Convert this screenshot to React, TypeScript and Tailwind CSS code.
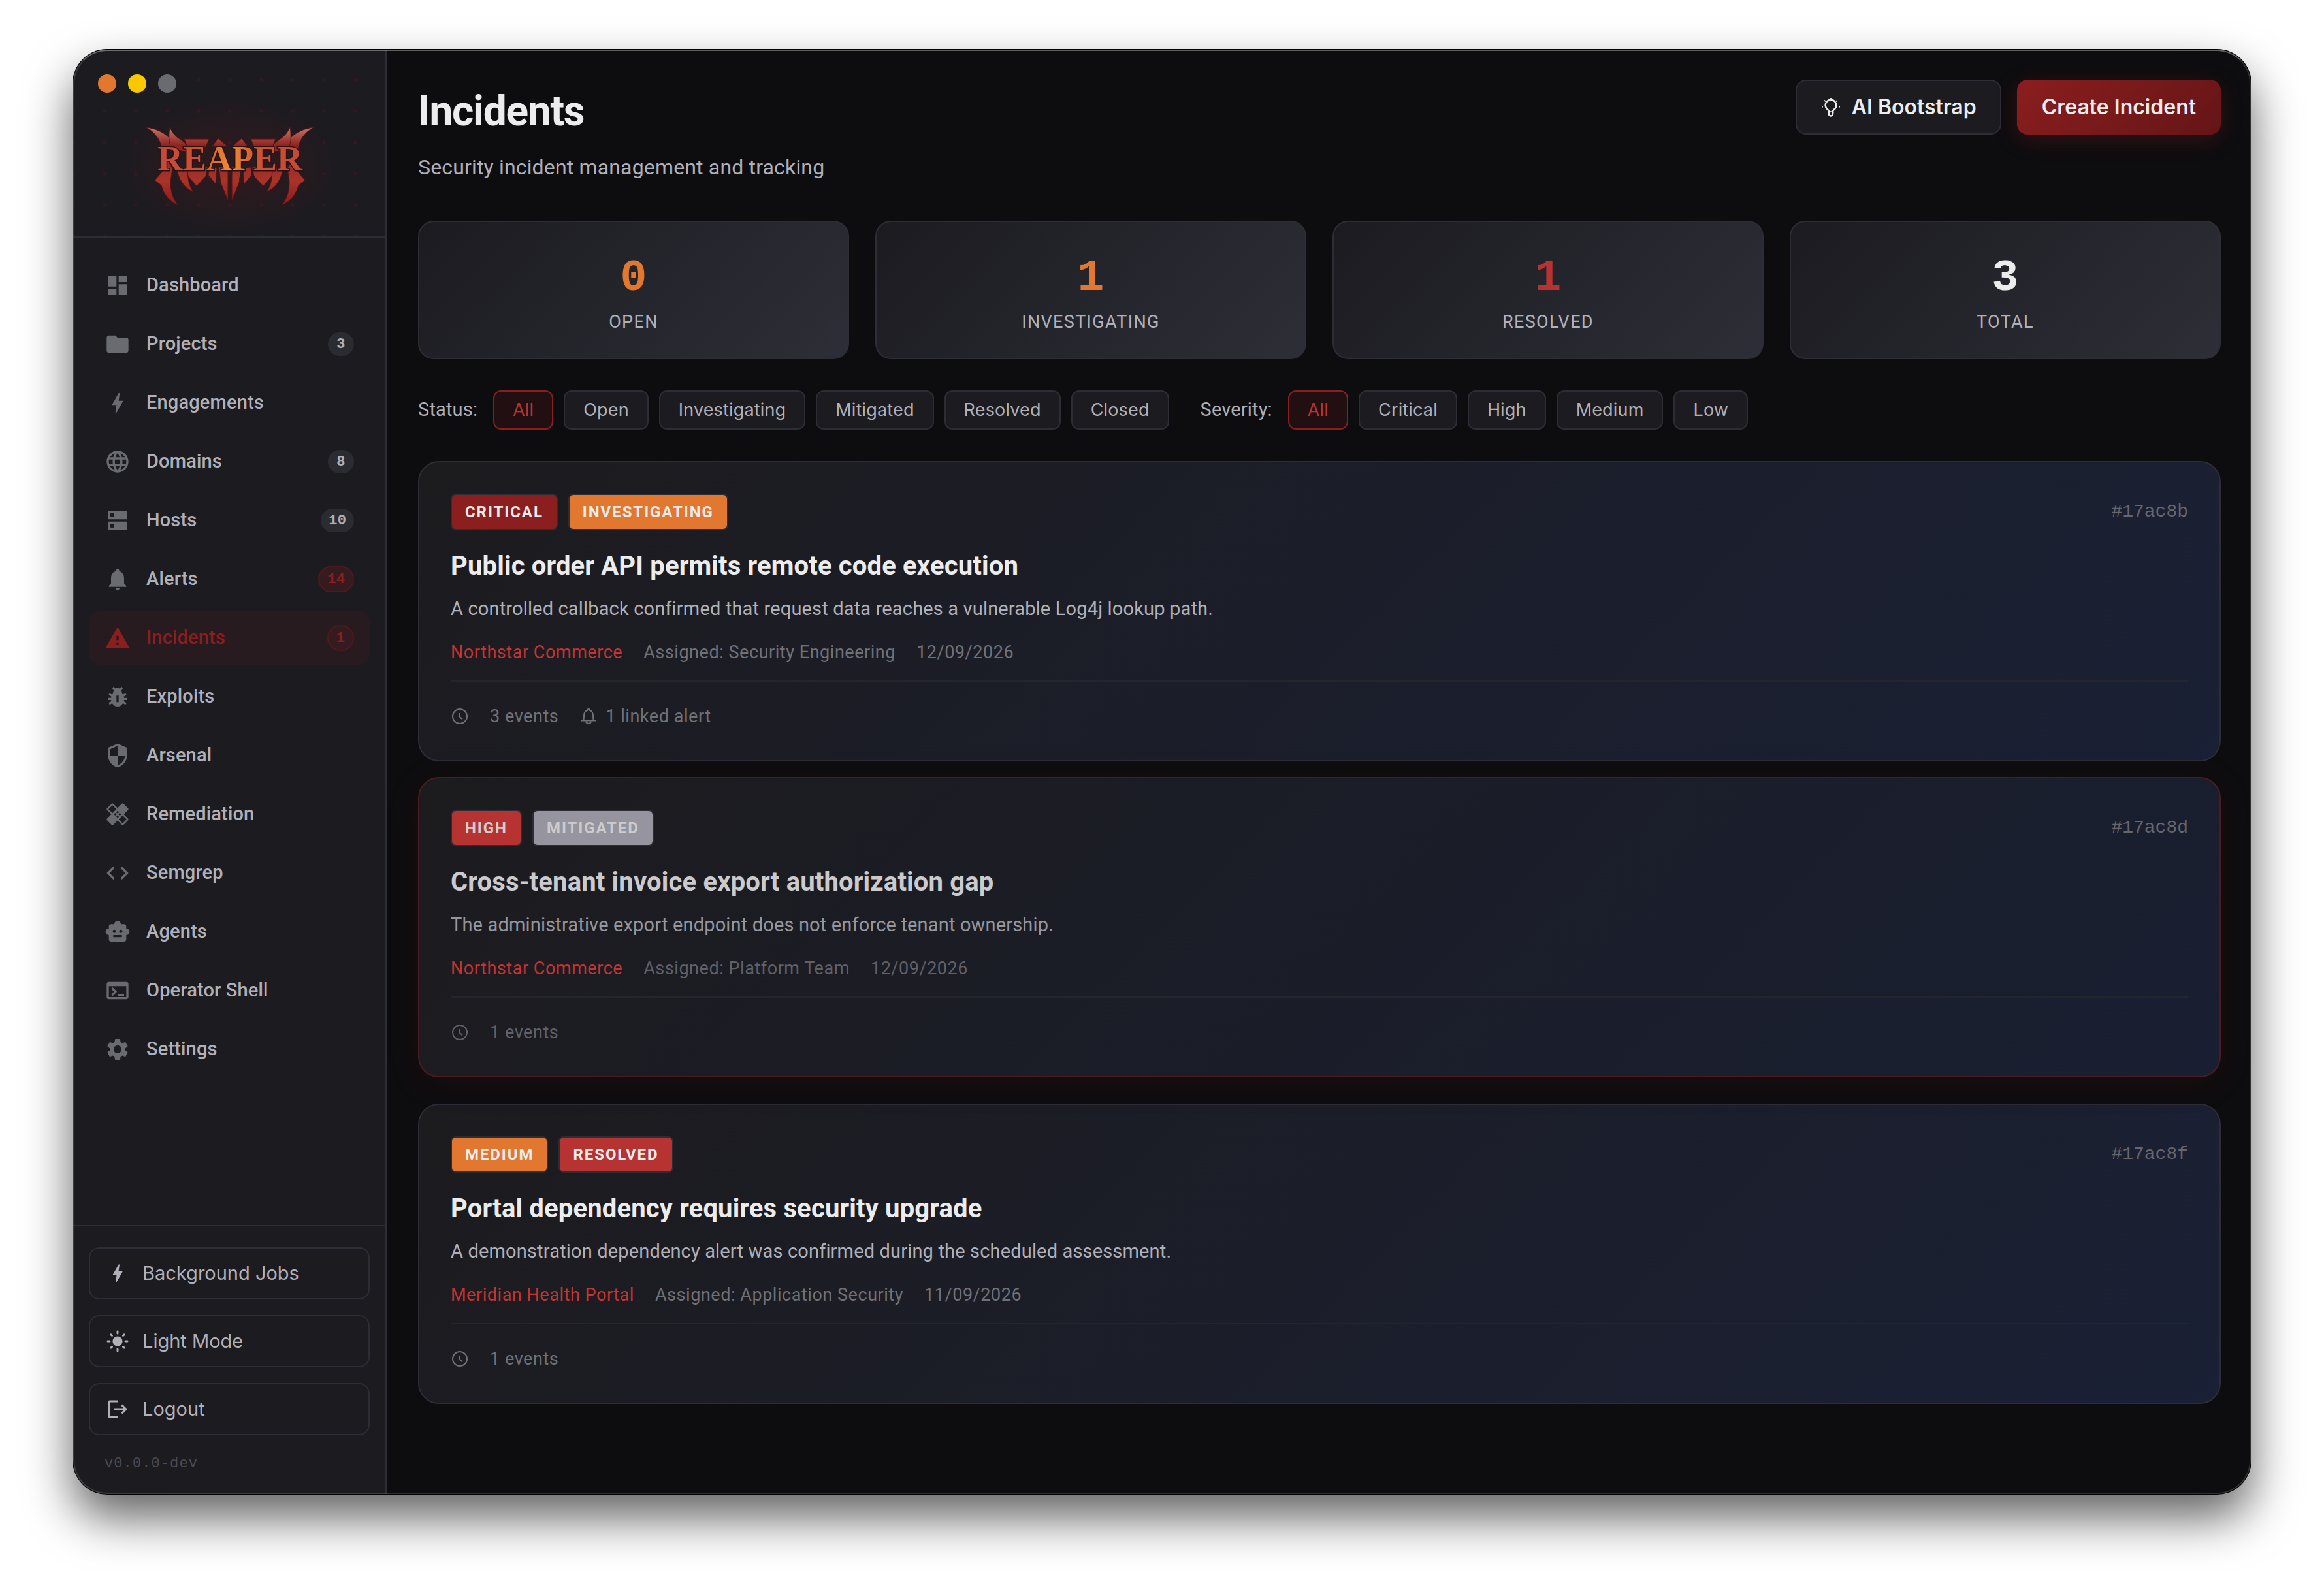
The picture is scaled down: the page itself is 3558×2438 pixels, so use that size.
import React, { useState } from 'react'
import type { IconType } from 'react-icons'
import {
  MdBolt,
  MdCode,
  MdDashboard,
  MdDns,
  MdFolder,
  MdHealing,
  MdLanguage,
  MdLightMode,
  MdLogout,
  MdNotifications,
  MdPestControl,
  MdSecurity,
  MdSettings,
  MdSmartToy,
  MdTerminal,
  MdWarning,
} from 'react-icons/md'

type NavItem = { label: string; icon: IconType; count?: number; alert?: boolean }

const nav: NavItem[] = [
  { label: 'Dashboard', icon: MdDashboard },
  { label: 'Projects', icon: MdFolder, count: 3 },
  { label: 'Engagements', icon: MdBolt },
  { label: 'Domains', icon: MdLanguage, count: 8 },
  { label: 'Hosts', icon: MdDns, count: 10 },
  { label: 'Alerts', icon: MdNotifications, count: 14, alert: true },
  { label: 'Incidents', icon: MdWarning, count: 1, alert: true },
  { label: 'Exploits', icon: MdPestControl },
  { label: 'Arsenal', icon: MdSecurity },
  { label: 'Remediation', icon: MdHealing },
  { label: 'Semgrep', icon: MdCode },
  { label: 'Agents', icon: MdSmartToy },
  { label: 'Operator Shell', icon: MdTerminal },
  { label: 'Settings', icon: MdSettings },
]

const stats = [
  { value: 0, label: 'Open', color: 'text-[#e27730]' },
  { value: 1, label: 'Investigating', color: 'text-[#e27730]' },
  { value: 1, label: 'Resolved', color: 'text-[#b73331]' },
  { value: 3, label: 'Total', color: 'text-[#ececec]' },
]

const incidents = [
  {
    id: '#17ac8b',
    severity: 'Critical',
    status: 'Investigating',
    title: 'Public order API permits remote code execution',
    description: 'A controlled callback confirmed that request data reaches a vulnerable Log4j lookup path.',
    project: 'Northstar Commerce',
    assigned: 'Security Engineering',
    date: '12/09/2026',
    events: 3,
    alerts: 1,
  },
  {
    id: '#17ac8d',
    severity: 'High',
    status: 'Mitigated',
    title: 'Cross-tenant invoice export authorization gap',
    description: 'The administrative export endpoint does not enforce tenant ownership.',
    project: 'Northstar Commerce',
    assigned: 'Platform Team',
    date: '12/09/2026',
    events: 1,
    alerts: 0,
  },
  {
    id: '#17ac8f',
    severity: 'Medium',
    status: 'Resolved',
    title: 'Portal dependency requires security upgrade',
    description: 'A demonstration dependency alert was confirmed during the scheduled assessment.',
    project: 'Meridian Health Portal',
    assigned: 'Application Security',
    date: '11/09/2026',
    events: 1,
    alerts: 0,
  },
]

const badgeColors: Record<string, string> = {
  Critical: 'bg-[#8b1e1e] text-[#ececec]',
  High: 'bg-[#b73331] text-[#d0cfcf]',
  Medium: 'bg-[#e27730] text-[#ececec]',
  Investigating: 'bg-[#e27730] text-[#ececec]',
  Mitigated: 'bg-[#96949e] text-[#cccbcd]',
  Resolved: 'bg-[#b73331] text-[#ececec]',
}

function Logo() {
  return (
    <svg viewBox="0 0 478 220" className="block w-full" role="img" aria-label="Reaper">
      <defs>
        <linearGradient id="lava" x1="130" x2="350" y1="0" y2="0" gradientUnits="userSpaceOnUse">
          <stop offset="0" stopColor="#c4483a" />
          <stop offset="0.3" stopColor="#cf5230" />
          <stop offset="0.5" stopColor="#ee8c34" />
          <stop offset="0.7" stopColor="#cf5230" />
          <stop offset="1" stopColor="#c4483a" />
        </linearGradient>
        <linearGradient id="blade" x1="0" x2="0" y1="50" y2="172" gradientUnits="userSpaceOnUse">
          <stop offset="0" stopColor="#c98070" />
          <stop offset="0.25" stopColor="#8f2420" />
          <stop offset="0.7" stopColor="#a8332a" />
          <stop offset="1" stopColor="#8a1a1a" />
        </linearGradient>
        <radialGradient id="glow">
          <stop offset="0" stopColor="#7a1515" stopOpacity="0.2" />
          <stop offset="0.6" stopColor="#7a1515" stopOpacity="0.1" />
          <stop offset="1" stopColor="#7a1515" stopOpacity="0" />
        </radialGradient>
      </defs>
      <ellipse cx="240" cy="112" rx="172" ry="104" fill="url(#glow)" />
      {/* blades round the word */}
      <g id="half" fill="url(#blade)" stroke="#5c1212" strokeWidth="1">
        <path d="M112 53c14 2 24 6 34 15l10 8-2 12-18-2c-3-14-10-25-24-33Z" />
        <path d="M148 53c5 10 9 14 18 20l12 10-4 8-24-6c-4-10-4-20-2-32Z" />
        <path d="M133 84l9 6v24l-10 12-7 8 10 8c4 14 12 24 25 30-8-12-11-22-11-36l3-20Z" />
        <path d="M158 114c4 20 11 31 26 38-7-10-9-20-8-34Z" />
        <path d="M170 71h38l-5 12h-28Z" />
        <path d="M174 114l2 14 13 15 14-15 3-14Z" />
        <path d="M213 82l9-12 14 12Z" />
        <path d="M208 114l-1 12 11 14 2-24Z" />
        <path d="M223 114l3 24 11 27v-51Z" />
      </g>
      <use href="#half" transform="matrix(-1 0 0 1 480 0)" />
      <text
        x="240"
        y="119"
        textAnchor="middle"
        fill="url(#lava)"
        stroke="#2a1114"
        strokeWidth="3"
        paintOrder="stroke"
        className="font-['Liberation_Serif',serif] text-[54px] font-bold tracking-normal"
      >
        REAPER
      </text>
    </svg>
  )
}

function BulbIcon() {
  return (
    <svg viewBox="0 0 32 32" className="size-8" fill="none" stroke="currentColor" strokeWidth="2.6" aria-hidden="true">
      <path d="M13 25v-2.5c0-1-.6-1.7-1.4-2.3a8.3 8.3 0 1 1 8.800 0c-.8.6-1.4 1.3-1.4 2.3V25" />
      <path d="M13 24v2.5a3 3 0 0 0 6 0V24" />
      <path d="M13 23h6" strokeWidth="1.6" />
      <path d="M16 2v1.8M3.8 15.5H2M30 15.5h-1.8M6 5.8l2 1.6M26 5.8l-2 1.6" strokeWidth="1.8" />
    </svg>
  )
}

function ClockIcon() {
  return (
    <svg viewBox="0 0 28 28" className="size-7" fill="none" stroke="currentColor" strokeWidth="2" aria-hidden="true">
      <circle cx="14" cy="14" r="11" />
      <path d="M14 9v6l4 3.5" />
    </svg>
  )
}

function BellIcon() {
  return (
    <svg viewBox="0 0 28 28" className="size-7" fill="none" stroke="currentColor" strokeWidth="2" aria-hidden="true">
      <path d="M2.5 20.5h23" />
      <path d="M6 20.5c1-2 1-4 1-7 0-4.5 1.5-7.5 5-8.5 0-1.3.8-2 2-2s2 .7 2 2c3.5 1 5 4 5 8.5 0 3 0 5 1 7" />
      <path d="M10 21.5c.5 2.5 2 3.5 4 3.5s3.5-1 4-3.5" />
    </svg>
  )
}

function Sidebar() {
  return (
    <aside className="flex w-[480px] shrink-0 flex-col border-r-2 border-[#2d2d35] bg-[#1c1b20]">
      <div className="border-b-2 border-[#2d2d35] bg-[radial-gradient(circle,#33191f_2px,transparent_3px)] bg-[length:48px_48px] bg-[position:24px_22px] pt-[38px]">
        <div className="flex gap-[18px] pl-[38px]">
          <span className="size-7 rounded-full bg-[#e27730]" />
          <span className="size-7 rounded-full bg-[#fac800]" />
          <span className="size-7 rounded-full bg-[#6a6b70]" />
        </div>
        <Logo />
      </div>

      <nav className="flex flex-1 flex-col gap-2 px-6 pt-8">
        {nav.map(({ label, icon: Icon, count, alert }) => {
          const active = label === 'Incidents'
          return (
            <a
              key={label}
              href={`#${label.toLowerCase().replace(' ', '-')}`}
              className={`flex h-[82px] items-center gap-6 rounded-2xl px-6 text-[29px] font-medium ${
                active ? 'bg-[#281b20] text-[#8b1e1e]' : 'text-[#b0b0b8]'
              }`}
            >
              <Icon className={`size-10 ${active ? '' : 'text-[#6a6b70]'}`} />
              <span className="flex-1">{label}</span>
              {count !== undefined && (
                <span
                  className={`flex min-w-10 items-center justify-center rounded-full px-3 font-['Liberation_Mono',monospace] text-[22px] font-bold ${
                    alert ? 'h-10 border-2 border-[#4d1b1e] bg-[#351b1f] text-[#8b1e1e]' : 'h-9 bg-[#2b2c31]'
                  }`}
                >
                  {count}
                </span>
              )}
            </a>
          )
        })}
      </nav>

      <div className="flex flex-col gap-6 border-t-2 border-[#2d2d35] px-6 pt-8 pb-[26px] font-['Inter',sans-serif] text-[29px] tracking-normal text-[#b0b0b8]">
        <button className="flex h-20 items-center gap-5 rounded-2xl border-2 border-[#2d2d35] px-6">
          <MdBolt className="size-9" /> Background Jobs
        </button>
        <button className="flex h-20 items-center gap-5 rounded-2xl border-2 border-[#2d2d35] px-6">
          <MdLightMode className="size-9" /> Light Mode
        </button>
        <button className="flex h-20 items-center gap-5 rounded-2xl border-2 border-[#2d2d35] px-6">
          <MdLogout className="size-9" /> Logout
        </button>
        <p className="px-6 font-['Liberation_Mono',monospace] text-[22px] leading-10 tracking-wider text-[#4b4b51]">
          v0.0.0-dev
        </p>
      </div>
    </aside>
  )
}

function FilterGroup({ label, options }: { label: string; options: string[] }) {
  const [selected, setSelected] = useState('All')
  return (
    <div className="flex items-center gap-4">
      <span className="mr-2 text-[29px]">{label}</span>
      {options.map((option) => (
        <button
          key={option}
          onClick={() => setSelected(option)}
          className={`h-[60px] rounded-xl border-2 px-7 font-['Inter',sans-serif] text-[27px] ${
            option === selected
              ? 'border-[#8b1e1e] bg-[#210f11] text-[#b73331]'
              : 'border-[#2d2d35] bg-[#1c1b20]'
          }`}
        >
          {option}
        </button>
      ))}
    </div>
  )
}

function Badge({ label }: { label: string }) {
  return (
    <span
      className={`flex h-14 items-center rounded-lg border-2 border-[#2d2d35] px-5 text-[24px] font-bold tracking-[0.08em] uppercase ${badgeColors[label]}`}
    >
      {label}
    </span>
  )
}

function IncidentCard({ incident }: { incident: (typeof incidents)[number] }) {
  const mitigated = incident.status === 'Mitigated'
  return (
    <article
      className={`rounded-[32px] border-2 bg-linear-135 from-[#1c1b1e] px-12 pt-12 pb-[46px] ${
        mitigated
          ? '-translate-y-2 border-[#4d1b20] to-[#191f32] text-[#95959d] shadow-[0_8px_56px_rgba(139,30,30,0.1)]'
          : 'border-[#2d2d35] to-[#1a2035] text-[#b0b0b8]'
      }`}
    >
      <div className="flex items-center gap-4">
        <Badge label={incident.severity} />
        <Badge label={incident.status} />
        <span className="ml-auto font-['Liberation_Mono',monospace] text-[28px] tracking-normal text-[#66666d]">
          {incident.id}
        </span>
      </div>
      <h2 className={`mt-7 text-[40px] leading-[54px] font-bold ${mitigated ? 'text-[#cbcacc]' : 'text-[#ececec]'}`}>
        {incident.title}
      </h2>
      <p className="mt-4 text-[29px] leading-[44px]">{incident.description}</p>
      <div
        className={`mt-6 flex gap-8 text-[27px] leading-[42px] tracking-[0.02em] ${
          mitigated ? 'text-[#606067]' : 'text-[#707077]'
        }`}
      >
        <a href="#projects" className="text-[#c43432]">
          {incident.project}
        </a>
        <span>Assigned: {incident.assigned}</span>
        <span>{incident.date}</span>
      </div>
      <div
        className={`mt-[22px] flex items-center gap-8 border-t-2 border-[#25262d] pt-8 text-[27px] leading-[42px] tracking-[0.02em] ${
          mitigated ? 'text-[#606067]' : 'text-[#707077]'
        }`}
      >
        <ClockIcon />
        <span>{incident.events} events</span>
        {incident.alerts > 0 && (
          <span className="flex items-center gap-3">
            <BellIcon /> {incident.alerts} linked alert
          </span>
        )}
      </div>
    </article>
  )
}

export default function App() {
  return (
    <div className="flex min-h-screen bg-white px-28 pt-[76px] pb-[150px] font-['Roboto',sans-serif] tracking-[0.01em]">
      <div className="relative flex flex-1 overflow-hidden rounded-[52px] bg-[#0d0d0f] shadow-[0_0_0_1px_#000,0_36px_72px_rgba(0,0,0,0.62)]">
        <Sidebar />

        <main className="min-w-0 flex-1 pt-[46px] pr-[46px] pb-12 pl-12 text-[#b0b0b8]">
          <header className="flex items-start justify-between">
            <div>
              <h1 className="text-[64px] leading-[98px] font-bold tracking-[-0.02em] text-[#ececec]">Incidents</h1>
              <p className="mt-[14px] text-[32px] leading-[44px]">Security incident management and tracking</p>
            </div>
            <div className="flex gap-6 font-['Inter',sans-serif] text-[32px] font-semibold tracking-normal text-[#ececec]">
              <button className="flex h-[84px] items-center gap-4 rounded-2xl border-2 border-[#2d2d35] bg-[#1c1b20] px-9">
                <BulbIcon /> AI Bootstrap
              </button>
              <button className="h-[84px] rounded-2xl bg-linear-135 from-[#8b1e1e] to-[#651517] px-[38px] shadow-[0_8px_32px_rgba(139,30,30,0.3)]">
                Create Incident
              </button>
            </div>
          </header>

          <section className="mt-[60px] grid grid-cols-4 gap-10">
            {stats.map((stat) => (
              <div
                key={stat.label}
                className="rounded-3xl border-2 border-[#2d2d35] bg-linear-135 from-[#1b1b20] to-[#2e2e38] pt-[46px] pb-9 text-center"
              >
                <p className={`font-['Liberation_Mono',monospace] text-[68px] leading-[80px] font-bold ${stat.color}`}>
                  {stat.value}
                </p>
                <p className="mt-2 text-[27px] leading-[38px] tracking-wider uppercase">{stat.label}</p>
              </div>
            ))}
          </section>

          <div className="mt-12 flex flex-wrap gap-12">
            <FilterGroup label="Status:" options={['All', 'Open', 'Investigating', 'Mitigated', 'Resolved', 'Closed']} />
            <FilterGroup label="Severity:" options={['All', 'Critical', 'High', 'Medium', 'Low']} />
          </div>

          <section className="mt-12 flex flex-col gap-8">
            {incidents.map((incident) => (
              <IncidentCard key={incident.id} incident={incident} />
            ))}
          </section>
        </main>

        {/* window edge highlight */}
        <div className="pointer-events-none absolute inset-0 rounded-[52px] border-2 border-white/15 border-t-white/35" />
      </div>
    </div>
  )
}
